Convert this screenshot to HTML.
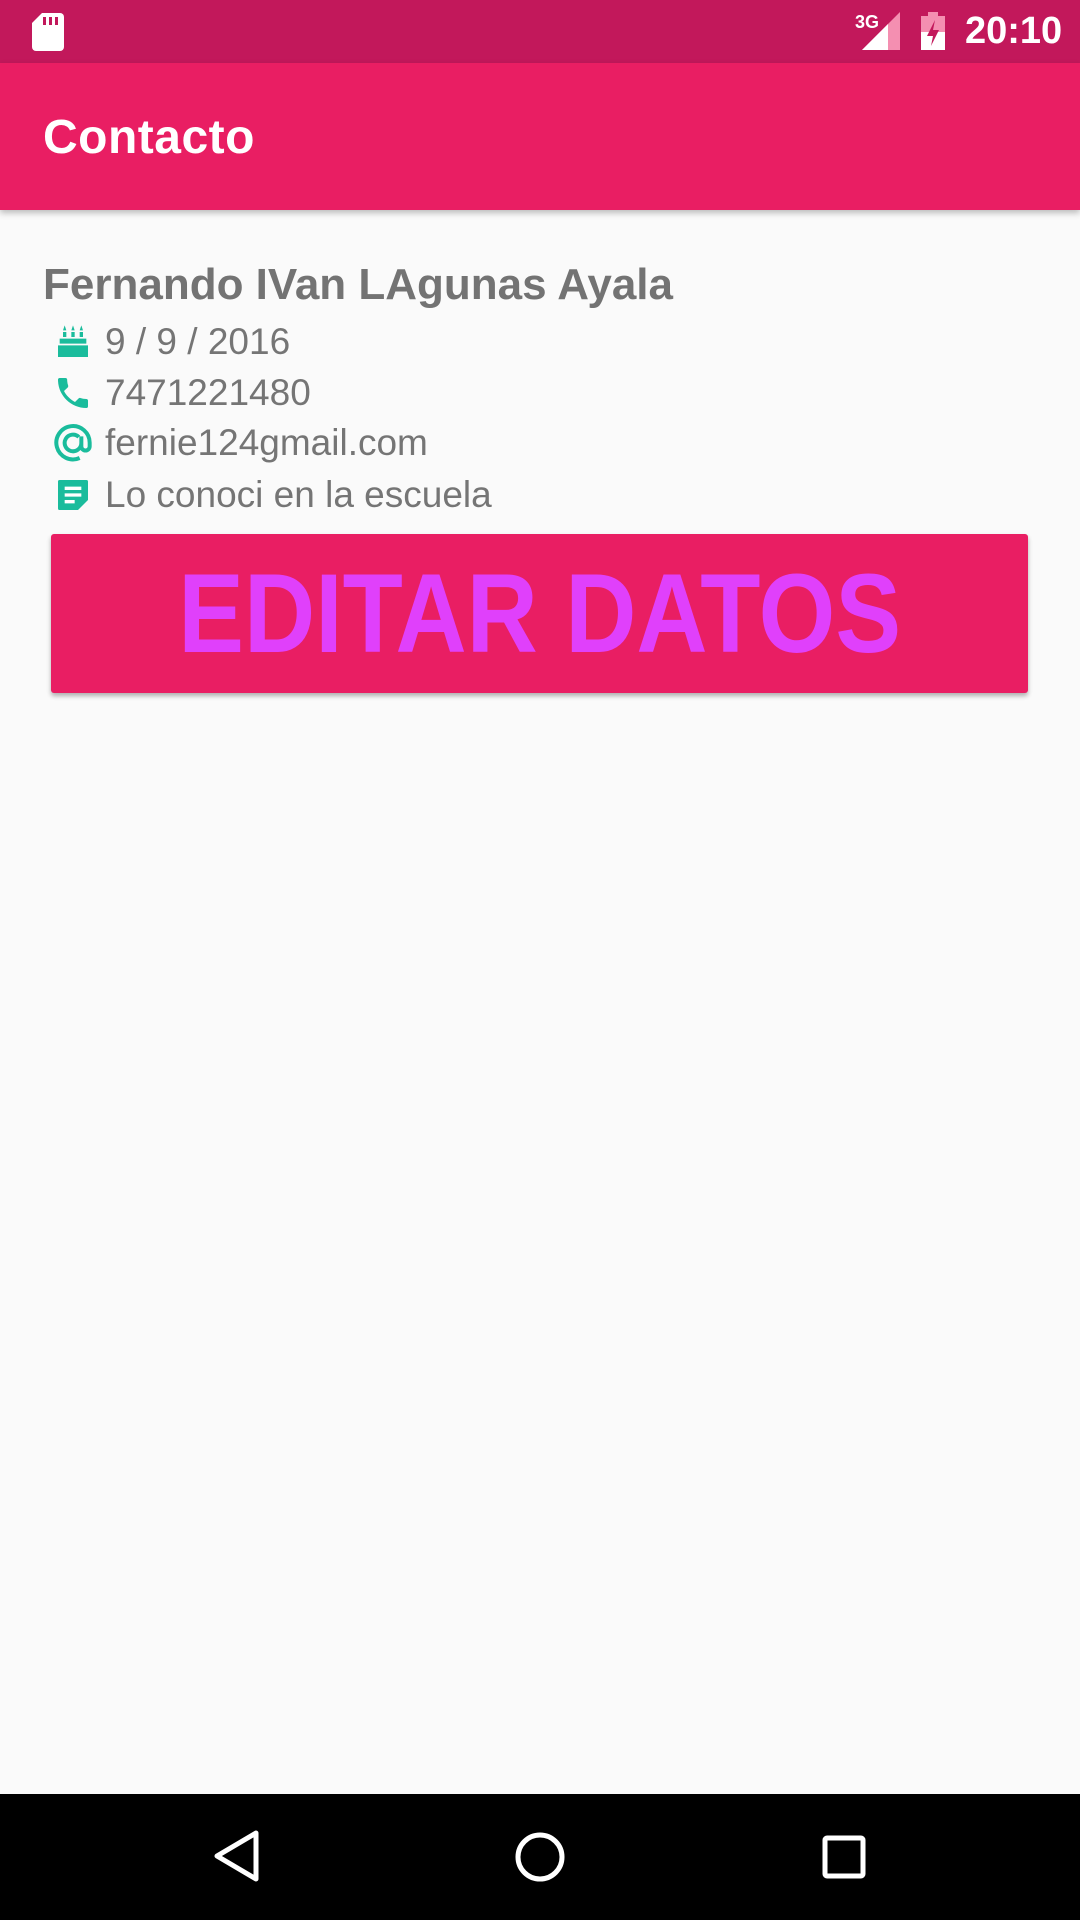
<!DOCTYPE html>
<html><head><meta charset="utf-8"><style>
*{margin:0;padding:0;box-sizing:border-box}
body{width:1080px;height:1920px;background:#fafafa;font-family:"Liberation Sans",Roboto,sans-serif;position:relative;overflow:hidden}
.sb{position:absolute;top:0;left:0;width:1080px;height:63px;background:#c2185b}
.ab{position:absolute;top:63px;left:0;width:1080px;height:147px;background:#e91e63;box-shadow:0 3px 6px rgba(0,0,0,.25)}
.ab span{position:absolute;left:43px;top:47px;color:#fff;font-size:48px;font-weight:bold;letter-spacing:0.5px}
.name{position:absolute;left:43px;top:260px;font-size:44px;font-weight:bold;color:#737373}
.row{position:absolute;left:53px;height:50px;display:flex;align-items:center;color:#757575;font-size:37px}
.row svg{width:40px;height:40px;margin-right:12px}
.btn{position:absolute;left:51px;top:534px;width:977px;height:159px;background:#e91e63;border-radius:3px;box-shadow:0 3px 5px rgba(0,0,0,.3);color:#e040fb;font-weight:bold;font-size:112px;text-align:center;line-height:159px}
.btn span{display:inline-block;transform:scaleX(0.88)}
.nav{position:absolute;top:1794px;left:0;width:1080px;height:126px;background:#000}
</style></head><body>
<div class="sb">
<svg style="position:absolute;left:32px;top:13px" width="32" height="38" viewBox="0 0 32 38"><path d="M10 0H28a4 4 0 0 1 4 4V34a4 4 0 0 1-4 4H4a4 4 0 0 1-4-4V10z" fill="#fff"/><rect x="11" y="4" width="3" height="8" fill="#c2185b"/><rect x="17" y="4" width="3" height="8" fill="#c2185b"/><rect x="23" y="4" width="3" height="8" fill="#c2185b"/></svg>
<div style="position:absolute;left:855px;top:12px;color:#fff;font-size:18px;font-weight:bold">3G</div>
<svg style="position:absolute;left:862px;top:12px" width="38" height="38"><path d="M38 0V38H0z" fill="#f48fb1"/><path d="M26 12V38H0z" fill="#fff"/></svg>
<svg style="position:absolute;left:921px;top:12px" width="24" height="38"><rect x="7" y="0" width="10" height="4" fill="#f48fb1"/><rect x="0" y="4" width="24" height="34" fill="#f48fb1"/><path d="M0 20H24V38H0z" fill="#fff"/><path d="M14 8L6 24H12L10 34L18 18H12z" fill="#c2185b"/></svg>
<div style="position:absolute;left:965px;top:10px;color:#fff;font-size:38px;font-weight:bold">20:10</div>
</div>
<div class="ab"><span>Contacto</span></div>
<div class="name">Fernando IVan LAgunas Ayala</div>
<div class="row" style="top:317px"><svg viewBox="0 0 24 24"><path fill="#1abc9c" d="M4 10h16v3H4zM3 14h18v7H3zM6 6h2v3H6zM11 6h2v3h-2zM16 6h2v3h-2zM7 2l1 3H6zM12 2l1 3h-2zM17 2l1 3h-2z"/></svg>9 / 9 / 2016</div>
<div class="row" style="top:368px"><svg viewBox="0 0 24 24"><path fill="#1abc9c" d="M6.6 10.8c1.4 2.8 3.8 5.1 6.6 6.6l2.2-2.2c.3-.3.7-.4 1-.2 1.1.4 2.3.6 3.6.6.6 0 1 .4 1 1V20c0 .6-.4 1-1 1C10.6 21 3 13.4 3 4c0-.6.4-1 1-1h3.5c.6 0 1 .4 1 1 0 1.3.2 2.5.6 3.6.1.3 0 .7-.2 1z"/></svg>7471221480</div>
<div class="row" style="top:418px"><svg viewBox="0 0 24 24"><path fill="none" stroke="#1abc9c" stroke-width="2.4" d="M17 12a5 5 0 1 1-1.5-3.6M17 8v6a2.5 2.5 0 0 0 5 0v-2A10 10 0 1 0 16 21"/></svg>fernie124gmail.com</div>
<div class="row" style="top:470px"><svg viewBox="0 0 24 24"><path fill="#1abc9c" d="M4 3h16a1 1 0 0 1 1 1v11l-6 6H4a1 1 0 0 1-1-1V4a1 1 0 0 1 1-1z"/><path fill="#fff" d="M7 7h10v2H7zM7 11h10v2H7zM7 15h6v2H7z"/></svg>Lo conoci en la escuela</div>
<div class="btn"><span>EDITAR DATOS</span></div>
<div class="nav">
<svg style="position:absolute;left:212px;top:35px" width="50" height="54"><path d="M44 4V50L5 27z" fill="none" stroke="#fff" stroke-width="5" stroke-linejoin="round"/></svg>
<svg style="position:absolute;left:514px;top:37px" width="52" height="52"><circle cx="26" cy="26" r="22" fill="none" stroke="#fff" stroke-width="5"/></svg>
<svg style="position:absolute;left:822px;top:41px" width="44" height="44"><rect x="3" y="3" width="38" height="38" rx="2" fill="none" stroke="#fff" stroke-width="5"/></svg>
</div>
</body></html>
